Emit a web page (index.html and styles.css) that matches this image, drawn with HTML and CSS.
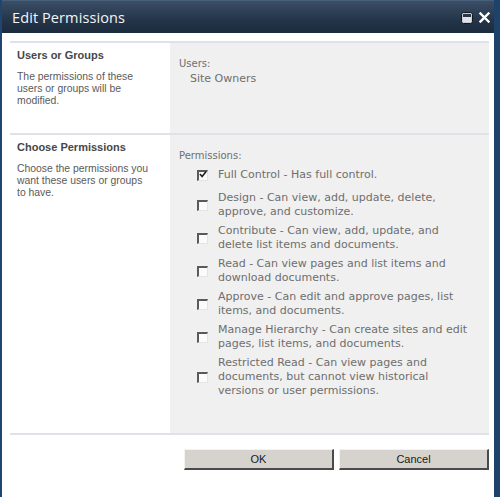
FILE: index.html
```html
<!DOCTYPE html>
<html>
<head>
    <title>Edit Permissions</title>
    <meta name="viewport" content="width=device-width, initial-scale=1.0">
    <link rel="stylesheet" href="styles.css">
</head>
<body>
    <div class="dialog">
        <div class="titlebar">
            <span class="title">Edit Permissions</span>
            <div class="controls">
                <svg class="icon-max" width="12" height="12" viewBox="0 0 12 12">
                    <rect x="0.5" y="0.5" width="11" height="11" rx="2" fill="#c8ccd2" stroke="#101820"/>
                    <rect x="2" y="2" width="8" height="3" fill="#2a3646"/>
                    <rect x="2" y="5" width="8" height="5" fill="#dfe2e6"/>
                </svg>
                <svg class="icon-close" width="11" height="11" viewBox="0 0 11 11">
                    <path d="M1.5 1.5 L9.5 9.5 M9.5 1.5 L1.5 9.5" stroke="#ffffff" stroke-width="2.4" stroke-linecap="square"/>
                </svg>
            </div>
        </div>

        <div class="content">
            <div class="section">
                <div class="section-info">
                    <h3>Users or Groups</h3>
                    <p>The permissions of these users or groups will be modified.</p>
                </div>
                <div class="section-field">
                    <div class="field-label">Users:</div>
                    <div class="field-value">Site Owners</div>
                </div>
            </div>

            <div class="section">
                <div class="section-info">
                    <h3>Choose Permissions</h3>
                    <p>Choose the permissions you want these users or groups to have.</p>
                </div>
                <div class="section-field perms">
                    <div class="field-label">Permissions:</div>
                    <ul class="perm-list">
                        <li class="perm">
                            <span class="box checked">
                                <svg width="9" height="9" viewBox="0 0 9 9"><path d="M1 4 L3.5 6.8 L8 1" fill="none" stroke="#222" stroke-width="1.8"/></svg>
                            </span>
                            <span class="perm-text">Full Control - Has full control.</span>
                        </li>
                        <li class="perm">
                            <span class="box"></span>
                            <span class="perm-text">Design - Can view, add, update, delete, approve, and customize.</span>
                        </li>
                        <li class="perm">
                            <span class="box"></span>
                            <span class="perm-text">Contribute - Can view, add, update, and delete list items and documents.</span>
                        </li>
                        <li class="perm">
                            <span class="box"></span>
                            <span class="perm-text">Read - Can view pages and list items and download documents.</span>
                        </li>
                        <li class="perm">
                            <span class="box"></span>
                            <span class="perm-text">Approve - Can edit and approve pages, list items, and documents.</span>
                        </li>
                        <li class="perm">
                            <span class="box"></span>
                            <span class="perm-text">Manage Hierarchy - Can create sites and edit pages, list items, and documents.</span>
                        </li>
                        <li class="perm">
                            <span class="box"></span>
                            <span class="perm-text">Restricted Read - Can view pages and documents, but cannot view historical versions or user permissions.</span>
                        </li>
                    </ul>
                </div>
            </div>

            <div class="buttons">
                <button class="button">OK</button>
                <button class="button">Cancel</button>
            </div>
        </div>
    </div>
</body>
</html>
```

FILE: styles.css
```css
body {
    margin: 0;
    background-color: white;
}

.dialog {
    height: 497px;
    box-sizing: border-box;
    border-left: 2px solid #1e4670;
    border-right: 6px solid #1d436b;
    background-color: white;
}

.titlebar {
    height: 33px;
    box-sizing: border-box;
    border-top: 1px solid #47607c;
    background: linear-gradient(#3b4e65, #24354a 60%, #1c2b3d);
    display: flex;
    align-items: center;
    justify-content: space-between;
    padding: 0 4px 0 10px;
}

.title {
    color: #f2f4f6;
    font-family: 'Open Sans', sans-serif;
    font-size: 14.5px;
    letter-spacing: 0.1px;
    margin-top: 1px;
}

.controls {
    display: flex;
    align-items: center;
    gap: 6px;
    margin-top: 1px;
}

.content {
    padding: 8px 5px 0 8px;
}

.section {
    display: grid;
    grid-template-columns: 160px 1fr;
    border-top: 2px solid #dfe3e8;
}

.section-info {
    padding: 5px 0 0 7px;
    font-family: 'Liberation Sans', Arial, sans-serif;
}

.section-info h3 {
    margin: 0 0 9px 0;
    font-size: 11px;
    font-weight: bold;
    color: #474747;
    line-height: 14px;
}

.section-info p {
    margin: 0;
    width: 135px;
    font-size: 10.4px;
    line-height: 12px;
    color: #5a5a5a;
}

.section-field {
    background-color: #f0f0f0;
    padding: 14px 0 0 9px;
    min-height: 76px;
    font-family: 'DejaVu Sans', Verdana, sans-serif;
    font-size: 11px;
    color: #6e6e6e;
    line-height: 13px;
}

.field-label {
    font-size: 10px;
}

.field-value {
    padding-left: 11px;
    margin-top: 2px;
}

.perms {
    padding-bottom: 30px;
}

.perm-list {
    list-style: none;
    margin: 2px 0 0 0;
    padding: 0 0 0 18px;
}

.perm {
    display: flex;
    align-items: center;
    min-height: 22px;
    margin-bottom: 5px;
}

.perm-text {
    width: 255px;
    margin-left: 10px;
    line-height: 14px;
}

.box {
    width: 11px;
    height: 11px;
    box-sizing: border-box;
    flex-shrink: 0;
    background-color: #fbfbfb;
    border-top: 2px solid #5a5a5a;
    border-left: 2px solid #5a5a5a;
    border-bottom: 1px solid #e4e4e4;
    border-right: 1px solid #e4e4e4;
    display: flex;
    align-items: center;
    justify-content: center;
}

.box svg {
    margin: -2px 0 0 0;
}

.buttons {
    border-top: 2px solid #dfe3e8;
    display: flex;
    justify-content: flex-end;
    gap: 5px;
    padding-top: 14px;
}

.button {
    width: 150px;
    height: 21px;
    background-color: #d6d3ce;
    border-top: 1px solid #f4f3f0;
    border-left: 1px solid #f4f3f0;
    border-right: 2px solid #4a4a4a;
    border-bottom: 2px solid #4a4a4a;
    font-family: 'Liberation Sans', Arial, sans-serif;
    font-size: 11px;
    color: #1a1a1a;
    padding: 0;
}
```
